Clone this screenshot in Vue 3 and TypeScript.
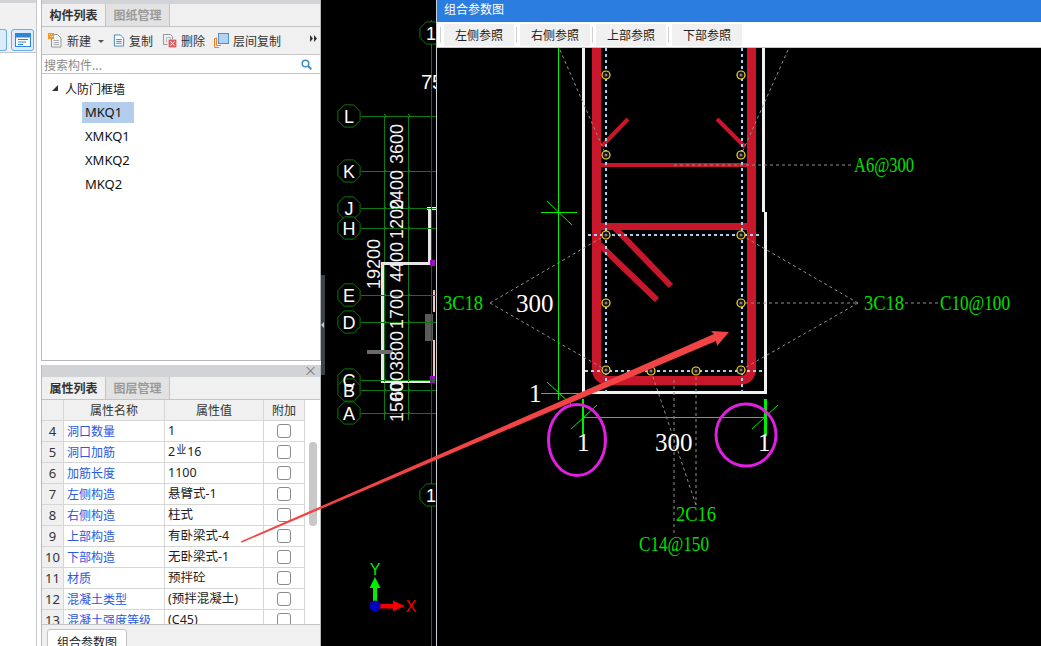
<script setup lang="ts">
const props_rows: { n: number; name: string; value: string; rebar?: boolean }[] = [
  { n: 4, name: '洞口数量', value: '1' },
  { n: 5, name: '洞口加筋', value: '2', rebar: true },
  { n: 6, name: '加筋长度', value: '1100' },
  { n: 7, name: '左侧构造', value: '悬臂式-1' },
  { n: 8, name: '右侧构造', value: '柱式' },
  { n: 9, name: '上部构造', value: '有卧梁式-4' },
  { n: 10, name: '下部构造', value: '无卧梁式-1' },
  { n: 11, name: '材质', value: '预拌砼' },
  { n: 12, name: '混凝土类型', value: '(预拌混凝土)' },
  { n: 13, name: '混凝土强度等级', value: '(C45)' },
]
const treeItems = ['MKQ1', 'XMKQ1', 'XMKQ2', 'MKQ2']
const refButtons = ['左侧参照', '右侧参照', '上部参照', '下部参照']

const axes = [
  { l: 'L', y: 116 }, { l: 'K', y: 171 }, { l: 'J', y: 208 }, { l: 'H', y: 228 },
  { l: 'E', y: 295 }, { l: 'D', y: 322 }, { l: 'C', y: 380 }, { l: 'B', y: 390 }, { l: 'A', y: 413 },
]
function octagon(cx: number, cy: number, r: number): string {
  const pts: string[] = []
  for (let i = 0; i < 8; i++) {
    const a = (Math.PI / 4) * i + Math.PI / 8
    pts.push(`${(cx + r * Math.cos(a)).toFixed(1)},${(cy + r * Math.sin(a)).toFixed(1)}`)
  }
  return pts.join(' ')
}
const dims = [
  { t: '3600', y: 144 }, { t: '2400', y: 190 }, { t: '1200', y: 219 }, { t: '4400', y: 262 },
  { t: '1700', y: 309 }, { t: '3800', y: 351 }, { t: '600', y: 386 }, { t: '1500', y: 402 },
]
const bars: [number, number][] = [
  [606, 75], [741, 75], [606, 155], [741, 155], [606, 235], [741, 235],
  [606, 303], [741, 303], [606, 370], [741, 370], [651, 371], [696, 371],
]
const leaders: [number, number, number, number][] = [
  [560, 50, 606, 155], [788, 50, 741, 155], [490, 303, 606, 235], [490, 303, 606, 370],
  [858, 303, 741, 235], [858, 303, 741, 370], [745, 303, 858, 303], [905, 303, 938, 303],
  [674, 165, 852, 165], [651, 371, 696, 505], [696, 371, 696, 505], [674, 380, 674, 535],
]
const labels: { t: string; x: number; y: number; w: number }[] = [
  { t: 'A6@300', x: 854, y: 172, w: 60 },
  { t: '3C18', x: 443, y: 310, w: 40 },
  { t: '3C18', x: 864, y: 310, w: 40 },
  { t: 'C10@100', x: 940, y: 310, w: 70 },
  { t: '2C16', x: 676, y: 521, w: 40 },
  { t: 'C14@150', x: 639, y: 551, w: 70 },
]
</script>

<template>
  <div class="page">
    <aside class="strip">
      <div class="strip-head"></div>
      <div class="strip-tools">
        <span class="strip-btn clipped"></span>
        <span class="strip-btn">
          <svg width="16" height="14" viewBox="0 0 16 14">
            <rect x="0.5" y="0.5" width="15" height="13" fill="#fff" stroke="#2f86d8" />
            <rect x="1" y="1" width="14" height="3.5" fill="#2f86d8" />
            <path d="M3 6.5h10M3 9h8M3 11.500h5" stroke="#2f86d8" stroke-width="1.200" />
          </svg>
        </span>
      </div>
    </aside>

    <section class="side">
      <div class="panel top-panel">
        <div class="grip"></div>
        <div class="tabs">
          <span class="tab active">构件列表</span>
          <span class="tab">图纸管理</span>
        </div>
        <div class="toolbar">
          <span class="tool">
            <svg width="15" height="15" viewBox="0 0 15 15">
              <path d="M3.500 1.500h6l3.500 3.500v9h-9.500z" fill="#f4f4f4" stroke="#8f989f" />
              <path d="M5.500 7.500h5.500M5.500 9.500h5.500M5.500 11.500h5.500" stroke="#a8aeb4" />
              <rect x="0" y="0" width="6" height="6" fill="#f7941d" />
              <path d="M1 1h1v1H1zM3 1h1v1H3zM2 3h1v1H2zM4 3h1v1H4z" fill="#ffe9b8" />
            </svg>
            新建<i class="caret"></i>
          </span>
          <span class="tool">
            <svg width="12" height="15" viewBox="0 0 13 15">
              <path d="M1.500 1.500h6.500l3.500 3.500v8.500h-10z" fill="#fff" stroke="#3f7fc4" />
              <path d="M3.500 6.500h6M3.500 8.500h6M3.500 10.500h6" stroke="#3f7fc4" />
            </svg>
            复制
          </span>
          <span class="tool">
            <svg width="15" height="15" viewBox="0 0 15 15">
              <path d="M1.500 1.500h7l2 2v3M1.500 1.500v10h4" fill="none" stroke="#8f989f" />
              <path d="M4.500 4.500h4v2M4.500 4.500v5" fill="none" stroke="#b4babf" />
              <rect x="7" y="7" width="7" height="7" fill="#e0686e" stroke="#c44" stroke-width="0.600" />
              <path d="M8.500 8.500l4 4M12.500 8.500l-4 4" stroke="#fff" />
            </svg>
            删除
          </span>
          <span class="tool">
            <svg width="15" height="15" viewBox="0 0 15 15">
              <path d="M0.500 14.500v-9h2M0.500 14.500h4.500M2.500 12.500v-8M2.500 12.500h4.500" fill="none" stroke="#f08030" />
              <rect x="4.500" y="0.500" width="10" height="10" fill="#b3d3f5" stroke="#4f8fd0" />
            </svg>
            层间复制
          </span>
          <span class="more">
            <svg width="7" height="7" viewBox="0 0 7 7"><path d="M0 0l3 3.500L0 7zM4 0l3 3.500L4 7z" fill="#333" /></svg>
          </span>
        </div>
        <div class="search">
          <span>搜索构件...</span>
          <svg width="11" height="11" viewBox="0 0 11 11">
            <circle cx="4.500" cy="4.500" r="3.300" fill="none" stroke="#3c8fc8" stroke-width="1.500" />
            <path d="M7 7l3.300 3.300" stroke="#3c8fc8" stroke-width="2" />
          </svg>
        </div>
        <div class="tree">
          <div class="tree-root"><i class="tri"></i>人防门框墙</div>
          <div v-for="(item, i) in treeItems" :key="item" class="tree-item" :class="{ selected: i === 0 }">{{ item }}</div>
        </div>
      </div>

      <div class="panel bottom-panel">
        <div class="grip tall"><span class="close">×</span></div>
        <div class="tabs">
          <span class="tab active">属性列表</span>
          <span class="tab">图层管理</span>
        </div>
        <div class="table-wrap">
          <div class="table">
            <div class="row head">
              <span class="c-idx"></span>
              <span class="c-name">属性名称</span>
              <span class="c-val">属性值</span>
              <span class="c-add">附加</span>
            </div>
            <div v-for="r in props_rows" :key="r.n" class="row">
              <span class="c-idx">{{ r.n }}</span>
              <span class="c-name link">{{ r.name }}</span>
              <span class="c-val">{{ r.value }}<template v-if="r.rebar"><sup class="rebar">业</sup>16</template></span>
              <span class="c-add"><i class="check"></i></span>
            </div>
          </div>
          <div class="scroll"><i class="thumb"></i></div>
        </div>
        <div class="bottom-tabs"><span class="doc-tab">组合参数图</span></div>
      </div>
    </section>

    <div class="splitter"><i class="handle"></i></div>

    <main class="canvas">
      <svg class="cad" viewBox="325 0 111 646" width="111" height="646">
        <g class="crisp">
          <path d="M431.500 20V646" stroke="#0a7a0a" fill="none" />
          <path d="M384.500 116V420M408.500 116V420" stroke="#0a7a0a" fill="none" />
          <path d="M429 209V263H382V381H431" fill="none" stroke="#e6e6e6" stroke-width="3" />
          <path d="M427 208H436" stroke="#fff" stroke-width="3" />
          <path d="M433.500 290V312M433.500 340V380" stroke="#f4c0c0" stroke-width="2" />
          <rect x="425" y="314" width="8" height="27" fill="#5a5a5a" />
          <rect x="367" y="350" width="26" height="4" fill="#6a6a6a" />
          <rect x="430" y="260" width="5" height="6" fill="#a010c0" />
          <rect x="430" y="376" width="5" height="7" fill="#a010c0" />
          <path v-for="a in axes" :key="'h' + a.l" :d="`M361 ${a.y + 0.5}H436`" stroke="#0a7a0a" />
          <path d="M431.500 116V413" stroke="#e00000" />
        </g>
        <g v-for="a in axes" :key="a.l">
          <path :d="`M384 ${a.y - 2}l2 2l-2 2M408 ${a.y - 2}l2 2l-2 2`" stroke="#0a8a0a" fill="none" />
          <polygon :points="octagon(349, a.y, 12)" fill="#000" stroke="#0a7a0a" />
        </g>
        <g v-for="a in axes" :key="'t' + a.l">
          <text class="bubble" x="349" :y="a.y + 6.500">{{ a.l }}</text>
        </g>
        <polygon :points="octagon(431, 33, 12)" fill="#000" stroke="#0a7a0a" />
        <polygon :points="octagon(431, 495, 12)" fill="#000" stroke="#0a7a0a" />
        <text class="bubble" x="431" y="40">1</text>
        <text class="bubble" x="431" y="502">1</text>
        <text class="bubble big" x="432" y="89">75</text>
        <g v-for="d in dims" :key="d.t">
          <text class="dim" :transform="`translate(403 ${d.y}) rotate(-90)`">{{ d.t }}</text>
        </g>
        <text class="dim" transform="translate(380 264) rotate(-90)">19200</text>
        <g fill="#00ee00" stroke="none">
          <rect x="373" y="587" width="4" height="15" />
          <polygon points="375,577 380.500,588 369.500,588" />
        </g>
        <g fill="#f00000" stroke="none">
          <rect x="378" y="604" width="16" height="4.500" />
          <polygon points="393,600.500 405,606 393,611.500" />
        </g>
        <circle cx="375" cy="606" r="5.500" fill="#0000c0" />
        <text class="axis green" x="375" y="575">Y</text>
        <text class="axis red" x="411" y="612">X</text>
      </svg>
    </main>

    <div class="dialog">
      <div class="title">组合参数图</div>
      <div class="refbar">
        <template v-for="b in refButtons" :key="b">
          <i class="sep"></i>
          <button class="ref-btn">{{ b }}</button>
        </template>
      </div>
      <svg class="drawing" viewBox="437 48 604 598" width="604" height="598">
        <path class="crisp" d="M583.500 48V392.500H765V212M763 48V212" fill="none" stroke="#f2f2f2" stroke-width="3" />
        <g fill="none" stroke="#c8172a">
          <path d="M596.500 48V368Q596.500 380.500 609 380.500H739Q751.500 380.500 751.500 368V48" stroke-width="9" />
          <path d="M601 226.500H748" stroke-width="7" />
          <path d="M601 165H748" stroke-width="4" />
          <path d="M602 146L628 119M745 147L717 119" stroke-width="4" />
          <path d="M600 245L657 300M615 228L671 286" stroke-width="6" />
        </g>
        <path class="crisp" d="M606 48V392M742 48V392M588 235H762M585 371H765" fill="none" stroke="#a9d0ee" stroke-width="2" stroke-dasharray="3 3" />
        <g stroke="#909090" stroke-dasharray="3 3" fill="none">
          <path v-for="(l, i) in leaders" :key="i" :d="`M${l[0]} ${l[1]}L${l[2]} ${l[3]}`" />
        </g>
        <g v-for="(p, i) in bars" :key="'b' + i">
          <circle :cx="p[0]" :cy="p[1]" r="4" fill="#111" stroke="#ffe020" stroke-width="1.200" />
          <circle :cx="p[0]" :cy="p[1]" r="1.500" fill="#808080" />
        </g>
        <g stroke="#00ee00" fill="none">
          <path class="crisp" d="M558.500 48V400M541 212.500H577M541 393.500H583M583 417.500H765" />
          <path d="M547 201L572 225M547 382L572 405M571 429L597 405M752 429L778 405" />
          <path class="crisp" d="M583 399V436" stroke-width="2" />
          <path class="crisp" d="M765 399V436" stroke-width="3" />
        </g>
        <ellipse cx="577" cy="440" rx="28.500" ry="35.500" fill="none" stroke="#e020e0" stroke-width="3" />
        <ellipse cx="746" cy="435" rx="30" ry="31" fill="none" stroke="#e020e0" stroke-width="3" />
        <text class="white-dim" x="516" y="312">300</text>
        <text class="white-dim" x="529" y="402">1</text>
        <text class="white-dim" x="577" y="451">1</text>
        <text class="white-dim" x="655" y="451">300</text>
        <text class="white-dim" x="758" y="451">1</text>
        <text v-for="(t, i) in labels" :key="'l' + i" class="rebar-label" :x="t.x" :y="t.y" :textLength="t.w" lengthAdjust="spacingAndGlyphs">{{ t.t }}</text>
      </svg>
    </div>

    <svg class="markup" width="1041" height="646" viewBox="0 0 1041 646">
      <polygon points="241,541.300 714,334 711,331 729,332 717,346 716,341 241.500,542.700" fill="#f24444" />
    </svg>
  </div>
</template>

<style scoped>
.page {
  position: relative;
  display: flex;
  width: 1041px;
  height: 646px;
  overflow: hidden;
  background: #000;
  font-family: "Noto Sans CJK SC", "Noto Sans", sans-serif;
  font-size: 12px;
  color: #222;
}
.crisp { shape-rendering: crispEdges; }
.strip {
  flex: 0 0 37px;
  background: #fff;
  border-right: 1px solid #c8c8cc;
  box-sizing: border-box;
}
.strip-head { height: 3px; background: #d2d3d7; }
.strip-tools {
  display: flex;
  justify-content: space-between;
  height: 50px;
  padding: 26px 0 0;
  box-sizing: border-box;
  background: #f1f1f1;
  border-bottom: 1px solid #c8c8cc;
}
.strip-btn {
  display: flex;
  align-items: center;
  justify-content: center;
  width: 23px;
  height: 22px;
  border: 1px solid #66aef0;
  border-radius: 3px;
  background: #dcecfb;
  box-sizing: border-box;
  margin-right: 2px;
}
.strip-btn.clipped { width: 7px; border-left: 0; border-radius: 0 3px 3px 0; flex: none; margin-right: 0; }
.side {
  flex: 0 0 284px;
  display: flex;
  flex-direction: column;
  padding-left: 4px;
  box-sizing: border-box;
  background: #fff;
}
.panel {
  box-sizing: border-box;
  border: solid #b8b9bd;
  border-width: 0 1px;
  width: 280px;
  display: flex;
  flex-direction: column;
}
.top-panel { height: 361px; border-bottom: 1px solid #b8b9bd; }
.bottom-panel { height: 281px; margin-top: 4px; flex: none; }
.grip { height: 4px; background: #d2d3d7; flex: none; position: relative; }
.grip.tall { height: 12px; }
.close { position: absolute; right: 3px; top: -3px; font-size: 13px; line-height: 16px; color: #777; }
.tabs {
  display: flex;
  height: 22px;
  flex: none;
  background: #f0f0f0;
  border-bottom: 1px solid #c4c4c8;
}
.tab {
  width: 64px;
  text-align: center;
  line-height: 22px;
  background: #e2e2e2;
  color: #9a9a9a;
  font-weight: 700;
  border-right: 1px solid #c4c4c8;
  box-sizing: border-box;
}
.tab.active { background: #f0f0f0; color: #333; }
.toolbar {
  display: flex;
  align-items: center;
  height: 28px;
  flex: none;
  background: #f0f0f0;
  border-bottom: 1px solid #c4c4c8;
  padding-left: 6px;
  gap: 9px;
  position: relative;
  box-sizing: border-box;
}
.tool { display: flex; align-items: center; gap: 4px; color: #333; white-space: nowrap; }
.caret {
  display: inline-block;
  width: 0;
  height: 0;
  margin-left: 3px;
  margin-top: 2px;
  border: 3px solid transparent;
  border-top: 3px solid #555;
  border-bottom: 0;
}
.more { position: absolute; right: 3px; top: 8px; display: flex; }
.search {
  display: flex;
  align-items: center;
  justify-content: space-between;
  height: 19px;
  flex: none;
  padding: 0 8px 0 2px;
  color: #8a8a8a;
  background: #fff;
  border-bottom: 1px solid #c4c4c8;
  box-sizing: border-box;
}
.tree { flex: 1; background: #fff; padding: 2px 0 0 0; font-family: "Noto Sans", "Noto Sans CJK SC", sans-serif; font-size: 13px; color: #111; }
.tree-root {
  display: flex;
  align-items: center;
  height: 24px;
  margin-bottom: 2px;
  padding-left: 10px;
  font-family: "Noto Sans CJK SC", sans-serif;
  font-size: 12px;
}
.tri {
  width: 0;
  height: 0;
  border-style: solid;
  border-width: 0 0 6px 6px;
  border-color: transparent transparent #333 transparent;
  margin-right: 7px;
}
.tree-item { margin-left: 40px; width: 52px; height: 21px; line-height: 21px; margin-bottom: 3px; padding-left: 3px; box-sizing: border-box; }
.tree-item.selected { background: #b3cdec; }
.table-wrap { display: flex; height: 225px; flex: none; overflow: hidden; background: #fff; border-bottom: 1px solid #c4c4c8; box-sizing: border-box; }
.table { width: 263px; flex: none; }
.row { display: flex; height: 21px; line-height: 20px; border-bottom: 1px solid #d6d6d6; box-sizing: border-box; }
.row > span { border-right: 1px solid #d6d6d6; box-sizing: border-box; white-space: nowrap; overflow: hidden; }
.c-idx { width: 22px; background: #f0f0f0; text-align: center; color: #333; font-family: "Noto Sans", sans-serif; font-size: 13px; }
.c-name { width: 101px; padding-left: 3px; }
.c-val { width: 99px; padding-left: 3px; color: #222; font-family: "Noto Sans", "Noto Sans CJK SC", sans-serif; font-size: 12.5px; }
.c-add { width: 41px; display: flex; align-items: center; justify-content: center; }
.link { color: #2a58e0; }
.head span { background: #f0f0f0; text-align: center; color: #333; padding: 0; font-size: 12px; font-family: inherit; }
.rebar { font-size: 10px; line-height: 0; vertical-align: 3px; font-family: "Noto Sans CJK SC", sans-serif; margin: 0 1px; }
.check { width: 14px; height: 14px; border: 1px solid #8a8a8a; border-radius: 3px; box-sizing: border-box; }
.scroll { flex: 1; position: relative; background: #fff; }
.thumb { position: absolute; left: 4px; top: 42px; width: 8px; height: 84px; border-radius: 4px; background: #c8c8c8; }
.bottom-tabs { flex: 1; background: #f0f0f0; padding: 4px 0 0 5px; overflow: hidden; }
.doc-tab {
  display: block;
  width: 80px;
  height: 24px;
  line-height: 24px;
  text-align: center;
  background: #fff;
  border: 1px solid #c4c4c8;
  border-radius: 3px 3px 0 0;
  box-sizing: border-box;
}
.splitter { flex: 0 0 4px; background: #000; position: relative; }
.handle { position: absolute; left: 0; top: 275px; width: 4px; height: 100px; background: #3d4248; }
.handle::after {
  content: "";
  position: absolute;
  left: 0;
  top: 47px;
  border-style: solid;
  border-width: 3px 3px 3px 0;
  border-color: transparent #c8c8c8 transparent transparent;
}
.canvas { flex: 0 0 111px; background: #000; }
.cad { display: block; }
.bubble { font-family: "Liberation Sans", sans-serif; font-size: 18px; fill: #fff; text-anchor: middle; }
.bubble.big { font-size: 20px; text-anchor: middle; }
.dim { font-family: "Liberation Sans", sans-serif; font-size: 18px; fill: #f2f2f2; text-anchor: middle; }
.axis { font-family: "Liberation Sans", sans-serif; font-size: 16px; text-anchor: middle; }
.green { fill: #00ee00; }
.red { fill: #f00000; }
.dialog {
  position: absolute;
  left: 436px;
  top: 0;
  width: 605px;
  height: 646px;
  display: flex;
  flex-direction: column;
  border-left: 1px solid #c8d0d8;
  box-sizing: border-box;
  background: #000;
}
.title { height: 22px; line-height: 18px; padding-left: 7px; background: #2b7de0; color: #fff; flex: none; }
.refbar {
  display: flex;
  align-items: center;
  height: 26px;
  flex: none;
  padding-left: 1px;
  background: #fff;
  border-bottom: 1px solid #c4c4c8;
  box-sizing: border-box;
}
.sep { width: 1px; height: 16px; background: #d0d0d0; margin: 0 3px 0 2px; flex: none; }
.ref-btn {
  width: 70px;
  height: 22px;
  padding: 0;
  border: 0;
  background: #f0f0f0;
  color: #222;
  font: inherit;
  flex: none;
}
.drawing { display: block; }
.white-dim { font-family: "Liberation Serif", serif; font-size: 25px; fill: #fff; }
.rebar-label { font-family: "Liberation Serif", serif; font-size: 21px; fill: #00e000; }
.markup { position: absolute; left: 0; top: 0; pointer-events: none; }
</style>
